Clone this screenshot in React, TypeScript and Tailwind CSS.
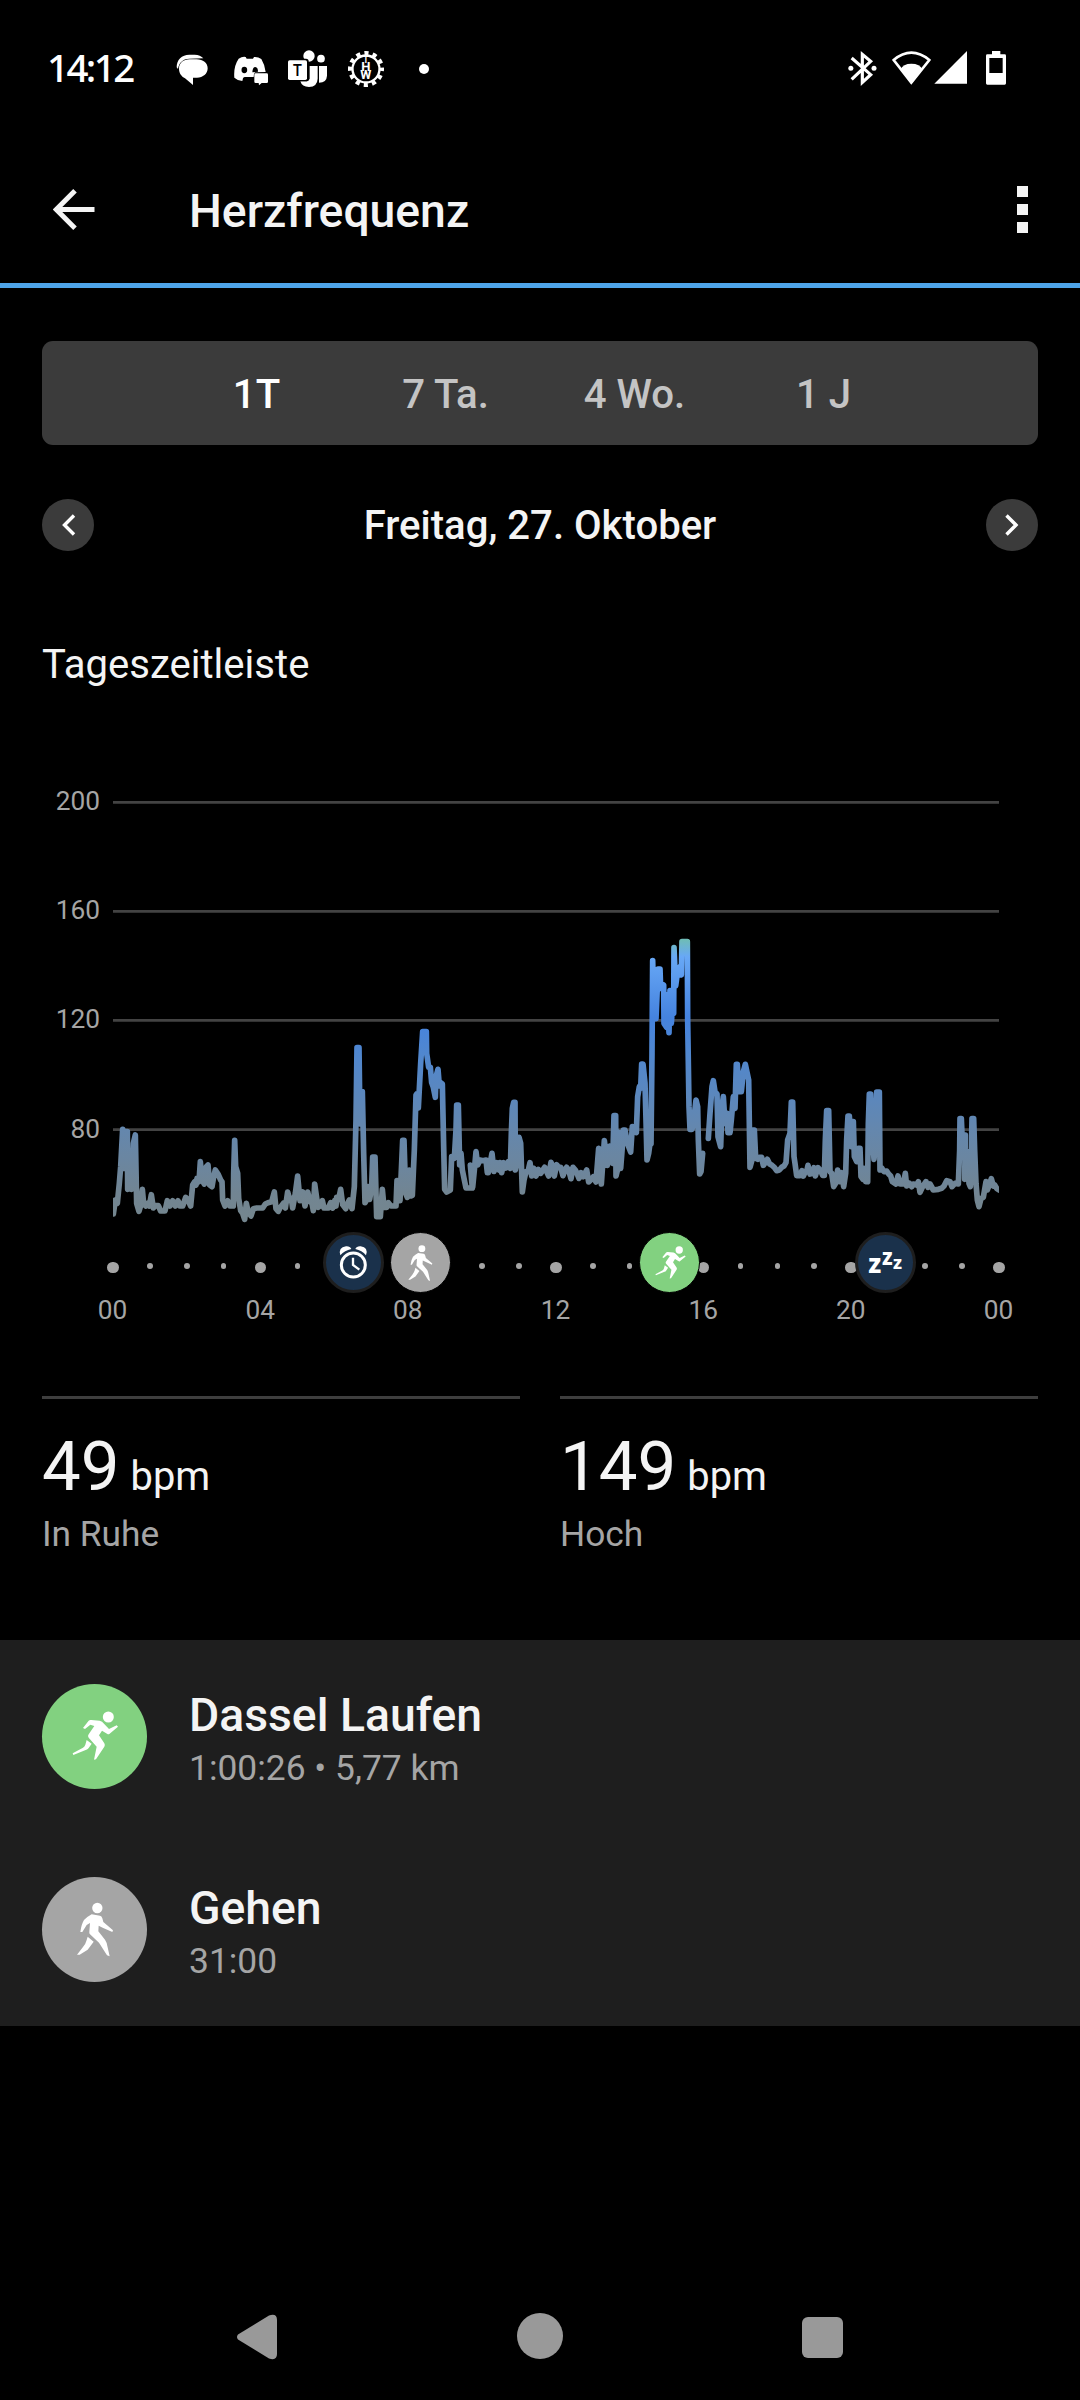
import type { ReactNode } from "react";
import clsx from "clsx";

type Chunk = { dx: number; dy: number; points: string };

// heart rate curve, stored in chunks with their own origin (3 units = 1px)
const BEFORE_PAUSE: Chunk[] = [
  {
    dx: -69,
    dy: 420,
    points:
      "70,882 76,840 82,850 88,790 92,740 98,628 101,745 106,635 112,635 113,808 118,750 124,808 130,670 136,645 140,850 147,874 151,860 157,808 161,852 168,858 172,850 178,858 184,824 190,864 196,857 205,857 212,873 225,873 232,842 240,858 248,842 256,858 264,842 270,858 278,858 287,832 294,840 302,858 308,795 314,785 318,795 321,775 327,785 331,725 336,780 343,792 349,740 354,735 359,795 366,800 371,770 376,750 384,762 392,780 396,785 398,840 405,858 413,842 420,858 430,858 431,760 434,661 437,740 443,760 446,835 452,872 458,880 464,898 469,850 474,874 483,888 490,866 500,864 518,864 526,852 534,848 545,845 553,816 558,866 565,874 571,862 580,850 586,864 593,816 600,842 604,835 608,864 616,820 623,768 630,842 638,816 645,858 653,816 660,845 666,850 670,872 674,792 684,862 690,858 697,842 702,864 715,864 722,848 728,864 734,842 738,858 740,832 746,838 752,808 758,854 767,866 773,850 778,840 786,866 793,800 798,600 801,383 807,383 810,612 812,515 817,515 821,700 825,848 830,840 834,800 839,838 845,800 848,711 855,711 860,890 871,890 877,808 882,862 890,862 895,848 903,858 918,858 921,782 926,790 930,842 938,661 942,661 947,820 952,832 958,750 962,828 967,826 973,690 978,525",
  },
  {
    dx: 861,
    dy: 600,
    points:
      "50,342 55,384 62,250 68,155 79,155 80,220 86,262 91,262 95,308 100,322 106,352 108,290 114,268 118,318 122,308 127,312 131,500 134,628 140,636 151,630 155,530 163,535 168,450 170,375 175,375 179,555 183,520 187,570 193,600 198,624 217,624 211,555 218,622 224,560 228,515 233,555 240,540 248,542 258,540 262,578 265,578 270,552 276,520 282,574 290,548 297,570 300,548 305,578 311,548 318,564 325,545 331,565 334,460 337,385 341,367 345,367 346,570 352,540 357,472 362,490 367,636 372,600 378,575 384,575 390,548 395,588 401,565 408,588 415,568 422,580 434,562 446,588 453,547 458,565 463,588 470,554 476,562 482,562 489,587 495,570 500,562 506,570 513,596 519,562 526,570 531,580 537,595 543,578 550,590 560,570 566,606 572,600 580,590 588,606 596,505 600,560 604,612 609,540 613,482 618,520 622,556 629,498 638,550 642,407 647,407 648,588 655,560 656,457 662,565 667,500 670,450 675,450 682,490 692,516 697,440 702,455 709,458 713,350 718,320 722,325 725,252 729,252 735,310 738,420 741,540 746,520 750,490",
  },
  {
    dx: 1461,
    dy: 420,
    points:
      "153,672 156,400 158,122 160,200 168,296 172,200 174,147 180,147 182,205 191,195 192,310 200,322 200,225 207,338 210,212 214,310 216,280 221,280 222,83 227,198 232,160 240,140 244,165 246,65 262,65 263,300 267,560 270,628 276,628 280,612 288,540 293,560 295,660 299,762 303,755 308,700",
  },
];

const AFTER_PAUSE: Chunk[] = [
  {
    dx: 1461,
    dy: 420,
    points:
      "325,655 330,580 336,500 340,482 345,515 351,522 354,650 362,680 366,560 370,530 375,610 381,580 384,638 390,638 394,600 400,530 405,565 409,433 412,433 417,515 424,515 430,455 436,433 446,480 450,742 456,720 459,630 463,630 467,715 473,718 478,712 485,712 490,736 502,718 509,732 516,736 523,742 530,752 538,750 545,742 552,738 558,728 563,660 570,640 574,546 578,546 582,710 585,730 590,767 600,767",
  },
  {
    dx: 2061,
    dy: 780,
    points:
      "6,392 10,408 16,395 20,395 24,376 30,402 38,400 42,383 46,408 54,383 62,392 68,406 73,406 76,300 80,212 86,212 90,395 95,400 101,440 107,430 113,390 119,425 125,398 131,440 137,400 140,300 144,228 148,228 154,320 157,245 160,245 163,350 170,365 174,325 180,325 183,410 189,418 192,385 197,425 203,425 205,250 208,162 212,162 218,300 222,358 227,300 230,156 238,156 240,390 246,385 252,395 260,393 266,402 272,408 277,425 288,432 294,408 300,432 310,432 316,400 320,438 328,430 335,440 340,432 350,435 355,425 360,457 368,440 378,425 384,442 390,432 400,450 415,448 425,445 432,438 440,422 450,425 456,440 465,430 475,432 479,330 480,236 484,236 488,330 492,285 496,285 494,418 500,410 503,335 507,430 511,440 514,340 516,236 521,236 524,330 528,430 532,480 537,500 543,475 550,472 558,425 562,450 568,435 574,416 580,438 584,435 590,445 597,450",
  },
];

const toPoints = (chunks: Chunk[]) =>
  chunks
    .flatMap((chunk) =>
      chunk.points.split(" ").map((p) => {
        const [x, y] = p.split(",").map(Number);
        return `${x + chunk.dx},${y + chunk.dy}`;
      })
    )
    .join(" ");

const RANGES = ["1T", "7 Ta.", "4 Wo.", "1 J"];
const BPM_LABELS = ["200", "160", "120", "80"];
const HOUR_LABELS = ["00", "04", "08", "12", "16", "20", "00"];

function RunIcon({ className }: { className?: string }) {
  return (
    <svg viewBox="126 162 315 315" className={className} fill="#fff">
      <circle cx="325" cy="261" r="16.5" />
      <path d="M249 294 266 272Q269 269 274 270L299 272Q307 274 312 281L327 297 350 286 354 290 328 312Q325 314 321 311L306 302 297 316 313 340Q316 345 313 350L288 388 282 389 290 350 266 323Q262 318 266 313L283 288 271 284 255 297Z" />
      <path d="M260 330 275 341 266 354Q264 358 259 359L220 375 218 370 249 353Q254 350 256 344Z" />
    </svg>
  );
}

function WalkIcon({ className }: { className?: string }) {
  return (
    <svg viewBox="126 741 315 315" className={className} fill="#fff">
      <circle cx="292" cy="834" r="15.5" />
      <path d="M241 906Q244 883 252 870 262 860 275 853L300 857Q305 858 307 865L310 876 339 901 337 906 308 893 296 887 295 904 315 929Q320 936 322 948L329 979 321 976 297 938 270 913Q267 910 268 905L270 879 260 885 247 906Z" />
      <path d="M263 920 281 935 263 959 239 974 231 974 249 951Q257 942 260 930Z" />
    </svg>
  );
}

function AlarmIcon() {
  return (
    <svg viewBox="699 66 183 183" className="absolute -inset-[3px] size-[61px]" fill="none" stroke="#fff">
      <circle cx="790" cy="165" r="36" strokeWidth="9" />
      <path d="M789 143V165L808 179" strokeWidth="7" />
      <path d="M751 136Q744 112 768 109 780 108 784 117 764 121 751 136ZM828 136Q836 112 812 109 800 108 796 117 816 121 828 136Z" fill="#fff" stroke="none" />
    </svg>
  );
}

function StatusBar() {
  return (
    <div className="flex h-[138px] items-center">
      <span className="mb-[4px] ml-[47px] w-[129px] font-['Noto_Sans'] text-[38.500px] font-medium leading-none tracking-[-2.600px] text-white">
        14:12
      </span>
      <svg viewBox="438 57 99 120" className="h-[40px] w-[33px]" fill="#fff">
        <path d="M440 112C440 89 455 74 478 74H494C505 74 515 79 520 85L478 86C458 87 447 98 444 117Z" />
        <path d="M447 116C447 99 460 88 479 88H500C519 88 533 99 533 115 533 132 519 143 501 143H489V165L465 145C454 139 447 129 447 116Z" />
      </svg>
      <svg viewBox="609 57 108 120" className="ml-[24px] h-[40px] w-[36px]" fill="#fff">
        <path d="M626 86Q637 79 647 81L650 86H669L672 81Q684 80 694 87 704 103 707 126L675 127Q671 130 671 141L645 141Q641 141 639 145L637 153Q623 152 613 143 610 109 626 86Z" />
        <ellipse cx="643" cy="120" rx="8.500" ry="9.500" fill="#000" />
        <path d="M667 127Q668 111 676 111 684 112 684 125Z" fill="#000" />
        <path d="M677 130H710Q714 130 714 134V155Q714 159 710 159H695L687 166 686 159H677Q673 159 673 155V134Q673 130 677 130Z" />
      </svg>
      <svg viewBox="774 57 117 120" className="ml-[19px] h-[40px] w-[39px]" fill="#fff">
        <circle cx="837" cy="78" r="17" />
        <circle cx="873" cy="86" r="11.500" />
        <path d="M839 108H863V146Q862 170 837 171 816 171 811 154H830Q837 152 839 146Z" />
        <path d="M867 108H891V137Q890 158 867 158Z" />
        <rect x="770" y="86" width="66" height="68" rx="8" fill="#000" />
        <rect x="774" y="91" width="57" height="59" rx="5" />
        <text x="802.5" y="138" textAnchor="middle" fill="#000" fontFamily="Open Sans" fontWeight="600" fontSize="47">
          T
        </text>
      </svg>
      <svg viewBox="951 57 114 120" className="ml-[20px] h-[40px] w-[38px]" fill="none" stroke="#fff">
        <circle cx="1008" cy="117" r="40.500" strokeWidth="7" />
        <circle cx="1008" cy="117" r="48" strokeWidth="12" strokeDasharray="12.570 12.560" strokeDashoffset="6.280" />
        <text fill="#fff" stroke="none" fontFamily="Roboto" fontWeight="700">
          <tspan x="1000" y="98" fontSize="25">T</tspan>
          <tspan x="994" y="123" fontSize="39">H</tspan>
          <tspan x="991" y="148" fontSize="38">W</tspan>
        </text>
      </svg>
      <span className="ml-[34px] size-[10px] rounded-full bg-white" />

      <svg viewBox="84 57 87 120" className="ml-auto h-[40px] w-[29px]" fill="#fff">
        <path d="M95 84 152 134 127 157V73L152 94 95 148" fill="none" stroke="#fff" strokeWidth="9.500" />
        <circle cx="92.500" cy="115" r="7.500" />
        <circle cx="162" cy="115" r="7.500" />
      </svg>
      <svg viewBox="216 57 117 120" className="ml-[15px] h-[40px] w-[39px]" fill="#fff">
        <path d="M274 158 221 90Q274 46 328 90Z" fill="none" stroke="#fff" strokeWidth="8" />
        <path d="M274 162 242 118Q249 101 274 101 300 101 307 118Z" />
      </svg>
      <svg viewBox="342 57 99 120" className="ml-[3px] h-[40px] w-[33px]" fill="#fff">
        <path d="M343 161 441 63V161Z" />
      </svg>
      <svg viewBox="498 57 60 120" className="ml-[19px] mr-[74px] h-[40px] w-[20px]" fill="#fff">
        <path
          fillRule="evenodd"
          d="M516 63H541V73H554Q558 73 558 77V160Q558 164 554 164H502Q498 164 498 160V77Q498 73 502 73H516ZM508 84V129H548V84Z"
        />
      </svg>
    </div>
  );
}

function Header() {
  return (
    <header className="flex h-[150px] items-center border-b-[5px] border-[#4ea4e8]">
      <svg viewBox="0 0 42 42" className="mb-[1px] ml-[53px] size-[42px]" fill="none" stroke="#f4f4f4" strokeWidth="5">
        <path d="M22 1.800 3.300 20.500 22 39.200M3 20.500H41.500" />
      </svg>
      <h1 className="ml-[94px] mt-[2px] text-[46.300px] font-medium text-[#f4f4f4]">Herzfrequenz</h1>
      <div className="mb-[2px] ml-auto mr-[52px] flex flex-col gap-[7px]">
        <span className="size-[11px] bg-[#f4f4f4]" />
        <span className="size-[11px] bg-[#f4f4f4]" />
        <span className="size-[11px] bg-[#f4f4f4]" />
      </div>
    </header>
  );
}

function RoundButton({ d }: { d: string }) {
  return (
    <button type="button" className="size-[52px] rounded-full bg-[#3b3b3b]">
      <svg viewBox="0 0 52 52" className="size-full" fill="none" stroke="#fff" strokeWidth="3.400">
        <path d={d} />
      </svg>
    </button>
  );
}

function HeartRateChart() {
  return (
    <div className="mt-[92px] flex">
      <div className="flex w-[71px] flex-col gap-[83.200px] pr-[13px] pt-[8px] text-right text-[26.250px] leading-[26px] text-[#a5a5a5]">
        {BPM_LABELS.map((label) => (
          <span key={label}>{label}</span>
        ))}
      </div>

      <div className="w-[886px]">
        <svg viewBox="0 0 2658 1356" className="h-[452px] w-[886px]" fill="none">
          <defs>
            <linearGradient id="bpm" gradientUnits="userSpaceOnUse" x1="0" y1="480" x2="0" y2="1310">
              <stop offset="0" stopColor="#6fbcb8" />
              <stop offset="0.060" stopColor="#68a8f6" />
              <stop offset="0.280" stopColor="#4583df" />
              <stop offset="0.410" stopColor="#5087cf" />
              <stop offset="0.680" stopColor="#6487ae" />
              <stop offset="0.920" stopColor="#728592" />
              <stop offset="1" stopColor="#74868f" />
            </linearGradient>
          </defs>
          <g stroke="#434343" strokeWidth="8">
            {[67, 394, 721, 1049].map((y) => (
              <path key={y} d={`M0 ${y}H2658`} />
            ))}
          </g>
          <g stroke="url(#bpm)" strokeWidth="17" strokeLinecap="round" strokeLinejoin="round">
            <polyline points={toPoints(BEFORE_PAUSE)} />
            <polyline points={toPoints(AFTER_PAUSE)} />
          </g>
        </svg>

        <div className="relative flex h-[61px] items-center justify-between">
          {Array.from({ length: 25 }).map((_, i) => (
            <span key={i} className="flex h-[16px] w-0 justify-center">
              <span
                className={clsx(
                  "shrink-0 rounded-full bg-[#a5a5a5]",
                  i % 4 === 0 ? "mt-[7px] size-[11.500px]" : "mt-[8.500px] size-[5.500px]"
                )}
              />
            </span>
          ))}
          <Badge className="left-[209.800px] border-[3px] border-[#1e1e1e] bg-[#1a314b]">
            <AlarmIcon />
          </Badge>
          <Badge className="left-[276.800px] border border-black bg-[#a5a5a5]">
            <WalkIcon className="size-[70px] shrink-0" />
          </Badge>
          <Badge className="left-[526.200px] border border-black bg-[#82d180]">
            <RunIcon className="size-[70px] shrink-0" />
          </Badge>
          <Badge className="left-[742.200px] border-[3px] border-[#1e1e1e] bg-[#1a314b]">
            <svg viewBox="736 66 183 183" className="absolute -inset-[3px] size-[61px]" fill="#fff" fontFamily="Noto Sans" fontWeight="800">
              <text x="776" y="188" fontSize="82" textLength="39" lengthAdjust="spacingAndGlyphs">z</text>
              <text x="817" y="165" fontSize="67" textLength="32" lengthAdjust="spacingAndGlyphs">z</text>
              <text x="850" y="177" fontSize="54" textLength="27" lengthAdjust="spacingAndGlyphs">z</text>
            </svg>
          </Badge>
        </div>

        <div className="-ml-[0.500px] flex h-[36px] w-[886px] items-center justify-between text-[26.250px] text-[#a5a5a5]">
          {HOUR_LABELS.map((hour, i) => (
            <span key={i} className="flex w-0 justify-center">
              {hour}
            </span>
          ))}
        </div>
      </div>
    </div>
  );
}

function Badge({ className, children }: { className: string; children: ReactNode }) {
  return (
    <div
      className={clsx(
        "absolute top-0 flex size-[61px] items-center justify-center rounded-full",
        className
      )}
    >
      {children}
    </div>
  );
}

function Stat({ value, label }: { value: string; label: string }) {
  return (
    <div className="flex-1 border-t-[3px] border-[#3e3e3e] pt-[28px]">
      <p className="text-[69px] leading-[80px] text-[#f4f4f4]">
        {value}
        <span className="ml-[11px] text-[39.800px]">bpm</span>
      </p>
      <p className="-mt-[3px] text-[35.300px] leading-[40px] text-[#a5a5a5]">{label}</p>
    </div>
  );
}

function Activity({ color, icon, title, details }: { color: string; icon: ReactNode; title: string; details: string }) {
  return (
    <li className="flex h-[193px] items-center gap-[42px] px-[42px]">
      <div className={clsx("size-[105px] rounded-full", color)}>{icon}</div>
      <div className="mt-[8px]">
        <p className="text-[46.300px] font-medium leading-[54px] text-[#f4f4f4]">{title}</p>
        <p className="text-[35.400px] leading-[52px] text-[#a5a5a5]">{details}</p>
      </div>
    </li>
  );
}

export default function App() {
  return (
    <div className="flex h-[2400px] w-[1080px] flex-col overflow-hidden bg-black font-['Roboto',sans-serif]">
      <StatusBar />
      <Header />

      <main className="px-[42px] pt-[53px]">
        <div className="flex h-[104px] items-center justify-center rounded-[11px] bg-[#3b3b3b] pt-[5px]">
          {RANGES.map((range, i) => (
            <button
              key={range}
              type="button"
              className={clsx(
                "w-[189px] text-[40.200px] font-medium",
                i === 0 ? "text-white" : "text-[#c4c4c4]"
              )}
            >
              {range}
            </button>
          ))}
        </div>

        <div className="mt-[54px] flex h-[52px] items-center justify-between">
          <RoundButton d="M32 16.500 22.500 26 32 35.500" />
          <p className="mt-[3px] text-[40.100px] font-medium text-[#f4f4f4]">Freitag, 27. Oktober</p>
          <RoundButton d="M20.500 16.500 30 26 20.500 35.500" />
        </div>

        <h2 className="mt-[90px] text-[40.100px] leading-[47px] text-[#f4f4f4]">Tageszeitleiste</h2>

        <HeartRateChart />

        <div className="mt-[67px] flex h-[244px] gap-[40px]">
          <Stat value="49" label="In Ruhe" />
          <Stat value="149" label="Hoch" />
        </div>
      </main>

      <ul className="bg-[#1e1e1e]">
        <Activity
          color="bg-[#82d180]"
          icon={<RunIcon className="size-full" />}
          title="Dassel Laufen"
          details="1:00:26 • 5,77 km"
        />
        <Activity
          color="bg-[#a5a5a5]"
          icon={<WalkIcon className="size-full" />}
          title="Gehen"
          details="31:00"
        />
      </ul>

      <nav className="mt-auto flex h-[128px] items-center justify-between pl-[236px] pr-[237px]">
        <svg viewBox="0 0 41 46" className="mt-[2px] h-[46px] w-[41px]" fill="#999">
          <path d="M2 20.500 33 1.500Q41 -1 41 6V40Q41 47 33 44.500L2 25.500Q0 23 2 20.500Z" />
        </svg>
        <span className="size-[46px] rounded-full bg-[#999]" />
        <span className="mt-[3px] size-[41px] rounded-[6px] bg-[#999]" />
      </nav>
    </div>
  );
}
